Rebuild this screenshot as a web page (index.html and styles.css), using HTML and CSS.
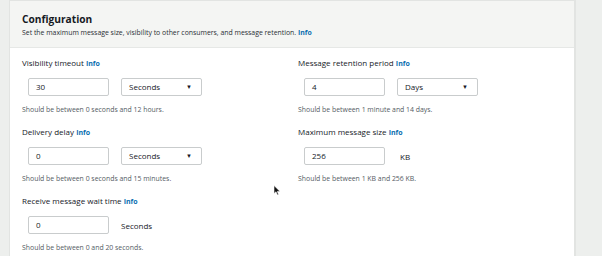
FILE: index.html
```html
<!DOCTYPE html>
<html>

<head>
    <title>Configuration</title>
    <link rel="stylesheet" href="styles.css">
</head>

<body>
    <div class="panel">
        <div class="panel-header">
            <h2 class="title">Configuration</h2>
            <p class="subtitle">Set the maximum message size, visibility to other consumers, and message retention. <a class="info" href="#">Info</a></p>
        </div>
        <div class="panel-body">
            <div class="field">
                <div class="label">Visibility timeout <a class="info" href="#">Info</a></div>
                <div class="controls">
                    <div class="input">30</div>
                    <div class="select">Seconds <span class="caret">&#9660;</span></div>
                </div>
                <div class="help">Should be between 0 seconds and 12 hours.</div>
            </div>
            <div class="field">
                <div class="label">Message retention period <a class="info" href="#">Info</a></div>
                <div class="controls">
                    <div class="input">4</div>
                    <div class="select">Days <span class="caret">&#9660;</span></div>
                </div>
                <div class="help">Should be between 1 minute and 14 days.</div>
            </div>
            <div class="field">
                <div class="label">Delivery delay <a class="info" href="#">Info</a></div>
                <div class="controls">
                    <div class="input">0</div>
                    <div class="select">Seconds <span class="caret">&#9660;</span></div>
                </div>
                <div class="help">Should be between 0 seconds and 15 minutes.</div>
            </div>
            <div class="field">
                <div class="label">Maximum message size <a class="info" href="#">Info</a></div>
                <div class="controls">
                    <div class="input">256</div>
                    <div class="unit unit-kb">KB</div>
                </div>
                <div class="help">Should be between 1 KB and 256 KB.</div>
            </div>
            <div class="field">
                <div class="label">Receive message wait time <a class="info" href="#">Info</a></div>
                <div class="controls">
                    <div class="input">0</div>
                    <div class="unit">Seconds</div>
                </div>
                <div class="help">Should be between 0 and 20 seconds.</div>
            </div>
        </div>
        <svg class="cursor" width="8" height="11" viewBox="0 0 8 11">
            <path d="M1 0.5 L1 8.5 L3 6.8 L4.4 10 L5.6 9.5 L4.3 6.4 L7 6.4 Z" fill="#111" stroke="#fff" stroke-width="0.6"/>
        </svg>
    </div>
</body>

</html>
```

FILE: styles.css
```css
body {
    margin: 0;
    padding: 0 0 0 9px;
    background-color: #edefed;
    font-family: "Open Sans", Arial, sans-serif;
    color: #16191f;
}

.panel {
    position: relative;
    width: 564px;
    height: 256px;
    background-color: #fff;
    border: 1px solid #e2e4e2;
    border-right-width: 2px;
    border-bottom: none;
}

.panel-header {
    background-color: #f4f5f3;
    border-bottom: 1px solid #e6e8e6;
    padding: 11px 12px 9px;
}

.title {
    margin: 0;
    font-size: 10.2px;
    line-height: 14px;
    font-weight: 700;
}

.subtitle {
    margin: 2px 0 0;
    font-size: 6.9px;
    line-height: 10px;
    color: #2a2e33;
}

.info {
    color: #0b6fb0;
    font-weight: 700;
    text-decoration: none;
}

.label .info {
    font-size: 7px;
    line-height: 8px;
}

.panel-body {
    display: grid;
    grid-template-columns: 276px 1fr;
    row-gap: 11px;
    padding: 9px 12px 0;
}

.label {
    height: 12px;
    font-size: 8px;
    line-height: 12px;
    font-weight: 500;
}

.controls {
    display: flex;
    align-items: center;
    gap: 12px;
    margin: 9px 0 0 6px;
}

.input,
.select {
    box-sizing: border-box;
    width: 81px;
    height: 18px;
    border: 1px solid #c9cccd;
    border-radius: 2px;
    padding: 0 7px;
    font-size: 8px;
    line-height: 16px;
}

.select {
    display: flex;
    justify-content: space-between;
    padding-right: 9px;
}

.caret {
    font-size: 6px;
}

.unit {
    font-size: 8px;
}

.unit-kb {
    padding-left: 3px;
}

.help {
    margin-top: 9px;
    font-size: 6.9px;
    line-height: 10px;
    color: #545b64;
}

.cursor {
    position: absolute;
    left: 263px;
    top: 184px;
}
```
